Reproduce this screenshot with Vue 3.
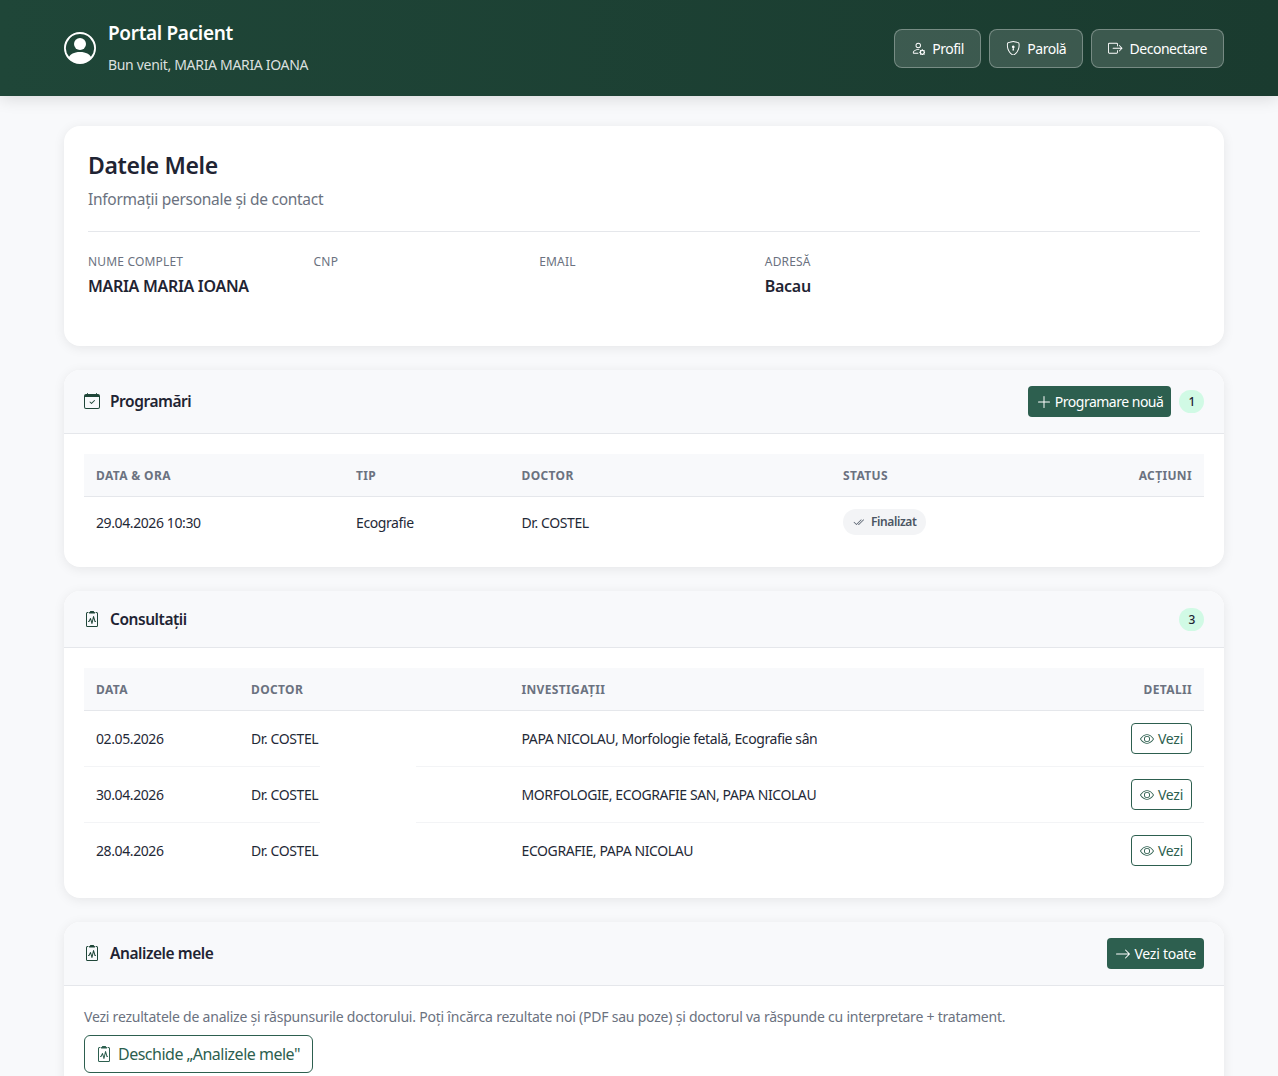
<script setup>
import { h } from 'vue'

const paths = {
  personCircle: ['M11 6a3 3 0 1 1-6 0 3 3 0 0 1 6 0', 'M0 8a8 8 0 1 1 16 0A8 8 0 0 1 0 8m8-7a7 7 0 0 0-5.468 11.37C3.242 11.226 4.805 10 8 10s4.757 1.225 5.468 2.37A7 7 0 0 0 8 1'],
  personGear: ['M11 5a3 3 0 1 1-6 0 3 3 0 0 1 6 0M8 7a2 2 0 1 0 0-4 2 2 0 0 0 0 4m.256 7a4.5 4.5 0 0 1-.229-1.004H3c.001-.246.154-.986.832-1.664C4.484 10.68 5.711 10 8 10q.39 0 .74.025c.226-.341.496-.65.804-.918Q8.844 9.002 8 9c-5 0-6 3-6 4s1 1 1 1zm3.63-4.54c.18-.613 1.048-.613 1.229 0l.043.148a.64.64 0 0 0 .921.382l.136-.074c.561-.306 1.175.308.87.869l-.075.136a.64.64 0 0 0 .382.92l.149.045c.612.18.612 1.048 0 1.229l-.15.043a.64.64 0 0 0-.38.921l.074.136c.305.561-.309 1.175-.87.87l-.136-.075a.64.64 0 0 0-.92.382l-.045.149c-.18.612-1.048.612-1.229 0l-.043-.15a.64.64 0 0 0-.921-.38l-.136.074c-.561.305-1.175-.309-.87-.87l.075-.136a.64.64 0 0 0-.382-.92l-.148-.045c-.613-.18-.613-1.048 0-1.229l.148-.043a.64.64 0 0 0 .382-.921l-.074-.136c-.306-.561.308-1.175.869-.87l.136.075a.64.64 0 0 0 .92-.382zM14 12.5a1.5 1.5 0 1 0-3 0 1.5 1.5 0 0 0 3 0'],
  shieldLock: ['M5.338 1.59a61 61 0 0 0-2.837.856.48.48 0 0 0-.328.39c-.554 4.157.726 7.19 2.253 9.188a10.7 10.7 0 0 0 2.287 2.233c.346.244.652.42.893.533q.18.085.293.118a1 1 0 0 0 .101.025 1 1 0 0 0 .1-.025q.114-.034.294-.118c.24-.113.547-.29.893-.533a10.7 10.7 0 0 0 2.287-2.233c1.527-1.997 2.807-5.031 2.253-9.188a.48.48 0 0 0-.328-.39c-.651-.213-1.75-.56-2.837-.855C9.552 1.29 8.531 1.067 8 1.067c-.53 0-1.552.223-2.662.524zM5.072.56C6.157.265 7.31 0 8 0s1.843.265 2.928.56c1.11.3 2.229.655 2.887.87a1.54 1.54 0 0 1 1.044 1.262c.596 4.477-.787 7.795-2.465 9.99a11.8 11.8 0 0 1-2.517 2.453 7 7 0 0 1-1.048.625c-.28.132-.581.24-.829.24s-.548-.108-.829-.24a7 7 0 0 1-1.048-.625 11.8 11.8 0 0 1-2.517-2.453C1.928 10.487.545 7.169 1.141 2.692A1.54 1.54 0 0 1 2.185 1.43 63 63 0 0 1 5.072.56', 'M9.5 6.5a1.5 1.5 0 0 1-1 1.415l.385 1.99a.5.5 0 0 1-.491.595h-.788a.5.5 0 0 1-.49-.595l.384-1.99a1.5 1.5 0 1 1 2-1.415'],
  boxArrow: ['M10 12.5a.5.5 0 0 1-.5.5h-8a.5.5 0 0 1-.5-.5v-9a.5.5 0 0 1 .5-.5h8a.5.5 0 0 1 .5.5v2a.5.5 0 0 0 1 0v-2A1.5 1.5 0 0 0 9.5 2h-8A1.5 1.5 0 0 0 0 3.5v9A1.5 1.5 0 0 0 1.5 14h8a1.5 1.5 0 0 0 1.5-1.5v-2a.5.5 0 0 0-1 0z', 'M15.854 8.354a.5.5 0 0 0 0-.708l-3-3a.5.5 0 0 0-.708.708L14.293 7.5H5.5a.5.5 0 0 0 0 1h8.793l-2.147 2.146a.5.5 0 0 0 .708.708z'],
  calendarCheck: ['M10.854 7.146a.5.5 0 0 1 0 .708l-3 3a.5.5 0 0 1-.708 0l-1.5-1.5a.5.5 0 1 1 .708-.708L7.5 9.793l2.646-2.647a.5.5 0 0 1 .708 0', 'M3.5 0a.5.5 0 0 1 .5.5V1h8V.5a.5.5 0 0 1 1 0V1h1a2 2 0 0 1 2 2v11a2 2 0 0 1-2 2H2a2 2 0 0 1-2-2V3a2 2 0 0 1 2-2h1V.5a.5.5 0 0 1 .5-.5M1 4v10a1 1 0 0 0 1 1h12a1 1 0 0 0 1-1V4z'],
  clipboardPulse: ['M9.5 0a.5.5 0 0 1 .5.5.5.5 0 0 0 .5.5.5.5 0 0 1 .5.5V2a.5.5 0 0 1-.5.5h-5A.5.5 0 0 1 5 2v-.5a.5.5 0 0 1 .5-.5.5.5 0 0 0 .5-.5.5.5 0 0 1 .5-.5z', 'M3 2.5a.5.5 0 0 1 .5-.5H4a.5.5 0 0 0 0-1h-.5A1.5 1.5 0 0 0 2 2.5v12A1.5 1.5 0 0 0 3.5 16h9a1.5 1.5 0 0 0 1.5-1.5v-12A1.5 1.5 0 0 0 12.5 1H12a.5.5 0 0 0 0 1h.5a.5.5 0 0 1 .5.5v12a.5.5 0 0 1-.5.5h-9a.5.5 0 0 1-.5-.5z', 'M9.979 5.356a.5.5 0 0 0-.968.04L7.92 10.49l-.94-3.135a.5.5 0 0 0-.926-.08L4.69 10H4.5a.5.5 0 0 0 0 1H5a.5.5 0 0 0 .447-.276l.936-1.873 1.138 3.793a.5.5 0 0 0 .968-.04L9.58 7.51l.94 3.135A.5.5 0 0 0 11 11h.5a.5.5 0 0 0 0-1h-.128z'],
  eye: ['M16 8s-3-5.5-8-5.5S0 8 0 8s3 5.5 8 5.5S16 8 16 8M1.173 8a13 13 0 0 1 1.66-2.043C4.12 4.668 5.88 3.5 8 3.5s3.879 1.168 5.168 2.457A13 13 0 0 1 14.828 8q-.086.13-.195.288c-.335.48-.83 1.12-1.465 1.755C11.879 11.332 10.119 12.5 8 12.5s-3.879-1.168-5.168-2.457A13 13 0 0 1 1.172 8z', 'M8 5.5a2.5 2.5 0 1 0 0 5 2.5 2.5 0 0 0 0-5M4.5 8a3.5 3.5 0 1 1 7 0 3.5 3.5 0 0 1-7 0'],
  plus: ['M8 2a.5.5 0 0 1 .5.5v5h5a.5.5 0 0 1 0 1h-5v5a.5.5 0 0 1-1 0v-5h-5a.5.5 0 0 1 0-1h5v-5A.5.5 0 0 1 8 2'],
  checkAll: ['M12.354 4.354a.5.5 0 0 0-.708-.708L5 10.293 1.854 7.146a.5.5 0 1 0-.708.708l3.5 3.5a.5.5 0 0 0 .708 0zm-4.208 7-.896-.897.707-.707.543.543 6.646-6.647a.5.5 0 0 1 .708.708l-7 7a.5.5 0 0 1-.708 0'],
  arrowRight: ['M1 8a.5.5 0 0 1 .5-.5h11.793l-3.147-3.146a.5.5 0 0 1 .708-.708l4 4a.5.5 0 0 1 0 .708l-4 4a.5.5 0 0 1-.708-.708L13.293 8.5H1.5A.5.5 0 0 1 1 8'],
}

const Icon = (props) =>
  h('svg', { viewBox: '0 0 16 16', fill: 'currentColor', class: 'icon', 'aria-hidden': 'true' },
    paths[props.name].map((d) => h('path', { d, 'fill-rule': 'evenodd' })))
Icon.props = ['name']

const headerActions = [
  { label: 'Profil', icon: 'personGear' },
  { label: 'Parolă', icon: 'shieldLock' },
  { label: 'Deconectare', icon: 'boxArrow' },
]

const consultations = [
  { date: '02.05.2026', doctor: 'Dr. COSTEL', tests: 'PAPA NICOLAU, Morfologie fetală, Ecografie sân' },
  { date: '30.04.2026', doctor: 'Dr. COSTEL', tests: 'MORFOLOGIE, ECOGRAFIE SAN, PAPA NICOLAU' },
  { date: '28.04.2026', doctor: 'Dr. COSTEL', tests: 'ECOGRAFIE, PAPA NICOLAU' },
]

const personal = [
  { label: 'Nume complet', value: 'MARIA MARIA IOANA' },
  { label: 'CNP', value: '' },
  { label: 'Email', value: '' },
  { label: 'Adresă', value: 'Bacau' },
]
</script>

<template>
  <div class="page">
    <header class="topbar">
      <div class="topbar-inner">
        <div class="brand">
          <Icon name="personCircle" class="brand-icon" />
          <div>
            <div class="brand-title">Portal Pacient</div>
            <div class="brand-sub">Bun venit, MARIA MARIA IOANA</div>
          </div>
        </div>
        <nav class="top-actions">
          <button v-for="a in headerActions" :key="a.label" class="top-btn">
            <Icon :name="a.icon" class="top-btn-icon" />{{ a.label }}
          </button>
        </nav>
      </div>
    </header>

    <main class="content">
      <section class="card profile">
        <h2 class="profile-title">Datele Mele</h2>
        <p class="profile-sub">Informații personale și de contact</p>
        <div class="profile-grid">
          <div v-for="p in personal" :key="p.label">
            <div class="field-label">{{ p.label }}</div>
            <div class="field-value">{{ p.value }}</div>
          </div>
        </div>
      </section>

      <section class="card">
        <div class="card-head tall">
          <h3 class="card-title"><Icon name="calendarCheck" class="title-icon" />Programări</h3>
          <div class="head-right">
            <button class="btn-solid"><Icon name="plus" class="solid-icon" />Programare nouă</button>
            <span class="count">1</span>
          </div>
        </div>
        <div class="card-body">
          <table class="table">
            <colgroup>
              <col style="width: 260px" /><col style="width: 165.5px" /><col style="width: 321.5px" /><col /><col style="width: 120px" />
            </colgroup>
            <thead>
              <tr><th>Data &amp; Ora</th><th>Tip</th><th>Doctor</th><th>Status</th><th class="right">Acțiuni</th></tr>
            </thead>
            <tbody>
              <tr>
                <td>29.04.2026 10:30</td>
                <td>Ecografie</td>
                <td>Dr. COSTEL</td>
                <td><span class="pill"><Icon name="checkAll" class="pill-icon" />Finalizat</span></td>
                <td></td>
              </tr>
            </tbody>
          </table>
        </div>
      </section>

      <section class="card">
        <div class="card-head">
          <h3 class="card-title"><Icon name="clipboardPulse" class="title-icon" />Consultații</h3>
          <span class="count">3</span>
        </div>
        <div class="card-body">
          <table class="table">
            <colgroup>
              <col style="width: 155px" /><col style="width: 270.5px" /><col /><col style="width: 120px" />
            </colgroup>
            <thead>
              <tr><th>Data</th><th>Doctor</th><th>Investigații</th><th class="right">Detalii</th></tr>
            </thead>
            <tbody>
              <tr v-for="c in consultations" :key="c.date">
                <td>{{ c.date }}</td>
                <td class="doctor-cell">{{ c.doctor }}<span class="rule-gap"></span></td>
                <td>{{ c.tests }}</td>
                <td class="right"><button class="btn-outline"><Icon name="eye" class="eye-icon" />Vezi</button></td>
              </tr>
            </tbody>
          </table>
        </div>
      </section>

      <section class="card">
        <div class="card-head tall">
          <h3 class="card-title"><Icon name="clipboardPulse" class="title-icon" />Analizele mele</h3>
          <button class="btn-solid wide"><Icon name="arrowRight" class="solid-icon" />Vezi toate</button>
        </div>
        <div class="card-body">
          <p class="analysis-text">Vezi rezultatele de analize și răspunsurile doctorului. Poți încărca rezultate noi (PDF sau poze) și doctorul va răspunde cu interpretare + tratament.</p>
          <button class="btn-outline large"><Icon name="clipboardPulse" class="open-icon" />Deschide „Analizele mele"</button>
        </div>
      </section>
    </main>
  </div>
</template>

<style>
html, body { background: #f8f9fb; }
html { scrollbar-width: none; }
</style>

<style scoped>
.page {
  font-family: "Noto Sans", "Open Sans", sans-serif;
  font-size: 14px;
  line-height: 1.5;
  color: #1f2937;
  background: #f8f9fb;
  letter-spacing: -0.25px;
}
.icon { display: inline-block; width: 1em; height: 1em; flex: none; }

.topbar {
  background: linear-gradient(90deg, #1f4638, #1a3b2f);
  box-shadow: 0 2px 16px rgba(0, 0, 0, 0.14);
  color: #fff;
}
.topbar-inner {
  display: flex;
  justify-content: space-between;
  align-items: center;
  height: 96px;
  padding: 0 54px 0 64px;
}
.brand { display: flex; align-items: center; gap: 12px; }
.brand-icon { font-size: 32px; }
.brand-title { font-size: 19px; font-weight: 600; line-height: 30px; margin-bottom: 6px; margin-top: -4px; letter-spacing: -0.33px; }
.brand-sub { font-size: 14px; line-height: 21px; color: rgba(255, 255, 255, 0.85); letter-spacing: -0.32px; }
.top-actions { display: flex; gap: 8px; }
.top-btn {
  display: inline-flex;
  align-items: center;
  gap: 7px;
  height: 39px;
  padding: 0 16px;
  border: 1px solid rgba(255, 255, 255, 0.3);
  border-radius: 8px;
  background: rgba(255, 255, 255, 0.15);
  color: #fff;
  font: inherit;
  letter-spacing: -0.5px;
}
.top-btn-icon { font-size: 14.5px; }

.content {
  display: flex;
  flex-direction: column;
  gap: 24px;
  padding: 30px 54px 48px 64px;
}
.card {
  background: #fff;
  border-radius: 16px;
  box-shadow: 0 2px 12px rgba(0, 0, 0, 0.08);
  overflow: hidden;
}
.profile { padding: 24px; }
.profile-title { margin: 0 0 7px; font-size: 23px; font-weight: 600; line-height: 30px; letter-spacing: -0.36px; color: #1f2433; }
.profile-sub { margin: 0; padding-bottom: 20px; border-bottom: 1px solid #e5e7eb; font-size: 15.5px; line-height: 24px; letter-spacing: -0.28px; color: #6b7280; }
.profile-grid {
  display: grid;
  grid-template-columns: repeat(5, 1fr);
  gap: 16px;
  padding: 21px 0 24px;
}
.field-label { font-size: 12px; line-height: 18px; color: #6b7280; text-transform: uppercase; margin-bottom: 3px; letter-spacing: 0.17px; }
.field-value { font-size: 16px; line-height: 24px; font-weight: 600; min-height: 24px; letter-spacing: -0.3px; color: #1f2433; }

.card-head {
  display: flex;
  justify-content: space-between;
  align-items: center;
  box-sizing: border-box;
  height: 57px;
  padding: 0 20px;
  background: #f8f9fb;
  border-bottom: 1px solid #e5e7eb;
}
.card-head.tall { height: 64px; }
.card-title { display: flex; align-items: center; gap: 10px; margin: 0; padding-bottom: 1px; font-size: 15.5px; font-weight: 600; line-height: 24px; letter-spacing: -0.45px; color: #1f2433; }
.title-icon { font-size: 16px; color: #1f4638; }
.head-right { display: flex; align-items: center; gap: 8px; }
.count {
  display: inline-block;
  padding: 0 9px;
  border-radius: 12px;
  background: #d1fae5;
  font-size: 12px;
  line-height: 23px;
  font-weight: 500;
  text-align: center;
  color: #1f2433;
}
.btn-solid {
  display: inline-flex;
  align-items: center;
  gap: 3px;
  height: 31px;
  padding: 0 8px;
  border: 0;
  border-radius: 4px;
  background: #2d5f4f;
  color: #fff;
  font: inherit;
  letter-spacing: -0.5px;
}
.btn-solid.wide { letter-spacing: -0.25px; }
.solid-icon { font-size: 16px; }
.card-body { padding: 20px; }

.table { width: 100%; border-collapse: separate; border-spacing: 0; table-layout: fixed; }
.table th {
  height: 40px;
  padding: 2px 12px 0;
  background: #f8f9fb;
  border-bottom: 1px solid #e5e7eb;
  font-size: 12px;
  font-weight: 700;
  letter-spacing: 0.35px;
  text-align: left;
  text-transform: uppercase;
  color: #6b7280;
}
.table td {
  padding: 12px;
  border-bottom: 1px solid #f3f4f6;
  vertical-align: middle;
  letter-spacing: -0.4px;
  color: #1f2937;
}
.table tbody tr:last-child td { border-bottom: 0; }
.table .right { text-align: right; }
.doctor-cell { position: relative; }
.rule-gap {
  position: absolute;
  left: 81px;
  bottom: -1px;
  width: 96px;
  height: 1px;
  background: #fff;
}
.pill {
  display: inline-flex;
  align-items: center;
  gap: 7px;
  height: 26px;
  padding: 0 10px;
  border-radius: 13px;
  background: #f3f4f6;
  font-size: 12px;
  font-weight: 600;
  letter-spacing: -0.4px;
  color: #4b5563;
  vertical-align: middle;
}
.pill-icon { font-size: 11px; }
.btn-outline {
  display: inline-flex;
  align-items: center;
  gap: 4px;
  height: 31px;
  padding: 0 8px;
  border: 1px solid #2d5f4f;
  border-radius: 4px;
  background: #fff;
  color: #2d5f4f;
  font: inherit;
  letter-spacing: -0.25px;
  vertical-align: middle;
}
.eye-icon { font-size: 14px; }
.btn-outline.large {
  height: 38px;
  padding: 0 12px 0 11px;
  border-radius: 6px;
  font-size: 16px;
  gap: 6px;
  letter-spacing: -0.5px;
}
.open-icon { font-size: 16px; }
.analysis-text { margin: 0 0 8px; color: #6b7280; letter-spacing: -0.22px; }
</style>
